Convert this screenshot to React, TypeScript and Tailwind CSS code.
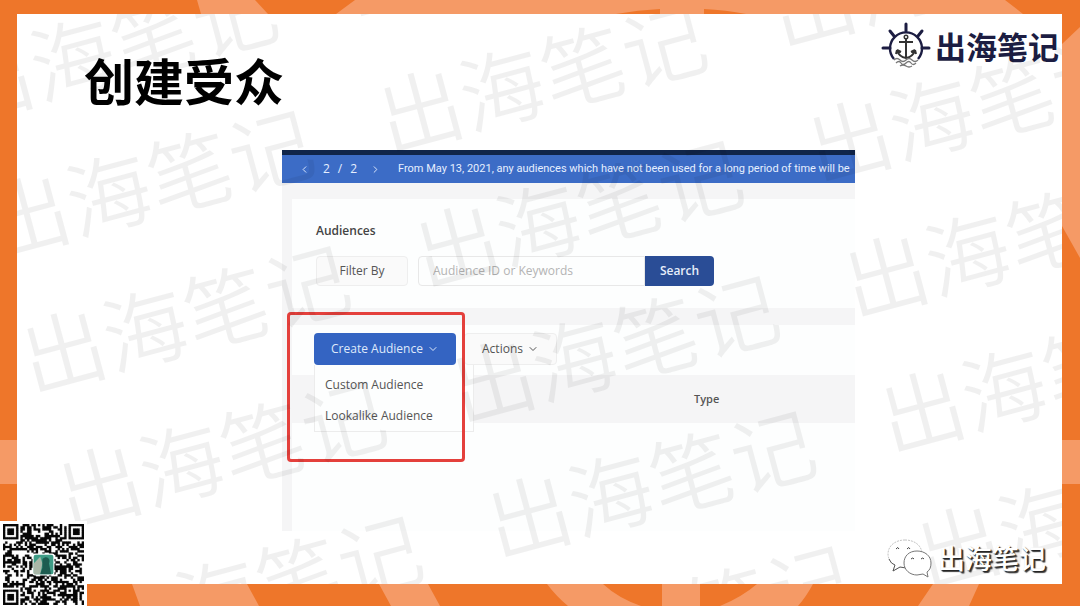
import React from "react"
import { ChevronDown, ChevronLeft, ChevronRight } from "lucide-react"

const QR_SIZE = 37

// The three big corner squares, plus the small alignment one
const finder = (x: number, y: number, ox: number, oy: number) => {
  const d = Math.max(Math.abs(x - ox), Math.abs(y - oy))
  if (d > 4) return null
  return d !== 2 && d !== 4
}

const isDark = (x: number, y: number) => {
  const corners = [[3, 3], [QR_SIZE - 4, 3], [3, QR_SIZE - 4]]
  for (const [cx, cy] of corners) {
    const hit = finder(x, y, cx, cy)
    if (hit !== null) return hit
  }
  const d = Math.max(Math.abs(x - 30), Math.abs(y - 30))
  if (d <= 2) return d !== 1
  const n = Math.sin(x * 12.9898 + y * 78.233) * 43758.5453
  return n - Math.floor(n) > 0.48
}

const QrCode = () => {
  let d = ""
  for (let y = 0; y < QR_SIZE; y++) {
    for (let x = 0; x < QR_SIZE; x++) {
      if (isDark(x, y)) d += `M${x} ${y}h1v1h-1z`
    }
  }
  return (
    <svg viewBox="0 0 37 37" className="size-[81px]" role="img" aria-label="QR code">
      <path d={d} fill="#0a0a0a" stroke="#0a0a0a" strokeWidth="0.1" />
      <rect x="13.5" y="13.5" width="10" height="10" rx="1" fill="#fff" />
      <rect x="14" y="14" width="9" height="9" rx="1" fill="#3f9c86" />
      <path d="M14 18l3-3 1 3-1 5h-3z" fill="#a9b7a8" />
      <path d="M18 16c2-2 4 0 3 2l1 5h-5l1-3z" fill="#1d5c50" />
    </svg>
  )
}

const FrameArt = () => (
  <svg
    viewBox="0 0 1080 606"
    preserveAspectRatio="none"
    className="absolute inset-0 size-full"
    fill="#f59a66"
    aria-hidden="true"
  >
    <path d="M197 0h58l13 14h-67z" />
    <path d="M355 0h650l18 14H746q-20-4-42-5v5h-44V9q-22 1-44 5H336z" />
    <path d="M1062 44l18-17v231l-18-32z" />
    <path d="M0 440h17v44H0zM1062 440h18v44h-18z" />
    <path d="M132 584h115l12 22H140zM379 584h49l12 22h-49z" />
    <path d="M547 584h56q15 14 38 22h-73q-12-10-21-22zM662 584h38v22h-38z" />
    <path d="M757 584h56q-7 13-15 22h-78q22-9 37-22zM933 584h46l-10 22h-51z" />
  </svg>
)

const Watermark = () => (
  <div
    aria-hidden="true"
    className="pointer-events-none absolute -left-[515px] -top-[24px] grid origin-top-left -rotate-15 grid-cols-[repeat(4,407px)] auto-rows-[140px] items-center text-[84px] leading-none font-[350] whitespace-nowrap text-black/6 select-none"
  >
    {Array.from({ length: 32 }, (_, i) => (
      <span key={i}>出海笔记</span>
    ))}
  </div>
)

const ShipWheel = () => (
  <svg viewBox="0 0 50 46" className="h-[46px] w-[50px]" fill="none" stroke="#1c1d42" aria-hidden="true">
    <path d="M13 37A16 16 0 1 1 37 37" strokeWidth="2.4" />
    <path d="M25 9V2M13 14L9 9M37 14L41 9M9 26H2M41 26H48" strokeWidth="3" strokeLinecap="round" />
    <circle cx="25" cy="15" r="1.8" strokeWidth="1.4" stroke="#333" />
    <path d="M25 17V35M18 20H32" strokeWidth="2" stroke="#333" />
    <path d="M16 28q2 7 9 8q7-1 9-8M16 28l-1 4M16 28l4 2M34 28l1 4M34 28l-4 2" strokeWidth="2" stroke="#333" />
    <path d="M13 38q3-3 6 0t6 0t6 0t6 0M15 41q3-3 5 0t5 0t5 0t5 0M19 44q3-2 6 0t6 0" strokeWidth="1.3" stroke="#777" />
  </svg>
)

const ChatBubbles = () => (
  <svg viewBox="0 0 48 40" className="h-10 w-12" fill="#fff" stroke="#777" strokeWidth="1" aria-hidden="true">
    <path d="M19 2C9 2 2 8 2 16c0 5 3 9 7 11l-2 6 7-4 8 1C32 29 36 23 36 16 36 8 29 2 19 2z" stroke="#c4c4c4" strokeDasharray="2 1" />
    <path d="M3 21q2 5 6 6l-2 6 7-4 6 1" stroke="#555" />
    <path d="M31 13c-8 0-13 5-13 12s6 12 13 12l6-1 5 3-1-5c3-2 4-5 4-9 0-7-6-12-14-12z" />
    <path d="M10 11q2-3 3 0M21 11q2-3 3 0M25 21q2-2 3 0M35 21q2-2 3 0" fill="none" stroke="#444" />
  </svg>
)

const AudienceManager = () => (
  <section className="bg-[#f5f5f6] font-['Open_Sans',sans-serif] text-xs text-[#555]">
    <div className="h-[5px] bg-[#10254a]" />
    <div className="flex h-7 items-center overflow-hidden bg-[#3c6cc6] pl-4 text-[11px] whitespace-nowrap text-[#e6efff]">
      <button aria-label="Previous notice" className="shrink-0 p-px">
        <ChevronLeft size={11} />
      </button>
      <span className="flex w-[58px] shrink-0 justify-center gap-2 text-xs">
        <span>2</span>
        <span>/</span>
        <span>2</span>
      </span>
      <button aria-label="Next notice" className="mr-4 shrink-0 p-px">
        <ChevronRight size={11} />
      </button>
      <p className="font-['Roboto',sans-serif]">
        From May 13, 2021, any audiences which have not been used for a long period of time will be
      </p>
    </div>

    <div className="pt-4 pl-[10px]">
      <div className="bg-[#fdfefe] px-6 pt-6 pb-[22px]">
        <h2 className="leading-4 font-semibold text-[#444]">Audiences</h2>
        <form className="mt-[17px] flex h-[30px]" onSubmit={(e) => e.preventDefault()}>
          <button type="button" className="w-[92px] rounded-sm border border-[#eee] bg-[#fafafa]">
            Filter By
          </button>
          <input
            type="text"
            aria-label="Audience ID or Keywords"
            placeholder="Audience ID or Keywords"
            className="ml-[10px] w-[227px] rounded-l-sm border border-[#e8e8e8] px-[14px] placeholder:text-[#b4b4b4]"
          />
          <button type="submit" className="w-[69px] rounded-r-sm bg-[#2a4d96] font-semibold text-[#e6edfa]">
            Search
          </button>
        </form>
      </div>

      <div className="mt-[17px] bg-[#fdfefe] pt-2 pb-[108px]">
        <div className="flex h-8 gap-2 pl-[22px]">
          <div className="relative flex">
            <button aria-expanded="true" className="flex w-[142px] items-center justify-center gap-1 rounded-sm bg-[#3464c2] text-[#dfe9fb]">
              Create Audience
              <ChevronDown size={12} />
            </button>
            <ul className="absolute top-8 left-0 w-[160px] border border-t-0 border-[#ececec] bg-[#fdfefe] pt-1">
              <li>
                <button className="h-[31px] px-[10px]">Custom Audience</button>
              </li>
              <li>
                <button className="h-[31px] px-[10px]">Lookalike Audience</button>
              </li>
            </ul>
            {/* highlight around the menu */}
            <div className="pointer-events-none absolute -top-[21px] -left-[27px] h-[150px] w-[178px] rounded-sm border-3 border-[#e4403c]" />
          </div>
          <button className="flex w-[93px] items-center justify-center gap-1 rounded-sm border border-[#eee] bg-[#fafafa]">
            Actions
            <ChevronDown size={12} />
          </button>
        </div>
        <table className="mt-[10px] w-full table-fixed text-left">
          <thead>
            <tr className="h-12 bg-[#f5f5f6]">
              <td className="w-[402px]" />
              <th className="text-[11px] font-semibold">Type</th>
            </tr>
          </thead>
        </table>
      </div>
    </div>
  </section>
)

const App = () => {
  return (
    <div className="relative flex min-h-screen flex-col bg-[#ee762a] pt-[14px] pr-[18px] pb-[22px] pl-[17px] font-['Noto_Sans_CJK_SC',sans-serif]">
      <FrameArt />
      <main className="relative flex flex-1 flex-col overflow-hidden bg-white">
        <header className="flex h-[97px] items-start justify-between">
          <h1 className="mt-[37px] pl-[67px] text-[50px] leading-[56px] font-bold text-black">创建受众</h1>
          <div className="flex items-center gap-1 pt-2 pr-[3px]">
            <ShipWheel />
            <span className="text-[31px] leading-none font-bold text-[#1c1d42]">出海笔记</span>
          </div>
        </header>

        <div className="mt-[39px] pr-[207px] pl-[265px]">
          <AudienceManager />
        </div>

        <Watermark />

        <footer className="relative flex min-h-[53px] flex-1 items-center justify-end gap-1 pr-4">
          <ChatBubbles />
          <span className="text-[27px] leading-none font-medium text-white [text-shadow:1px_1px_1px_#222,2px_2px_1px_#444]">
            出海笔记
          </span>
        </footer>
      </main>

      <aside className="absolute bottom-0 left-0 bg-white pt-[3px] pr-[3px] pb-px pl-[3px]">
        <QrCode />
      </aside>
    </div>
  )
}

export default App
